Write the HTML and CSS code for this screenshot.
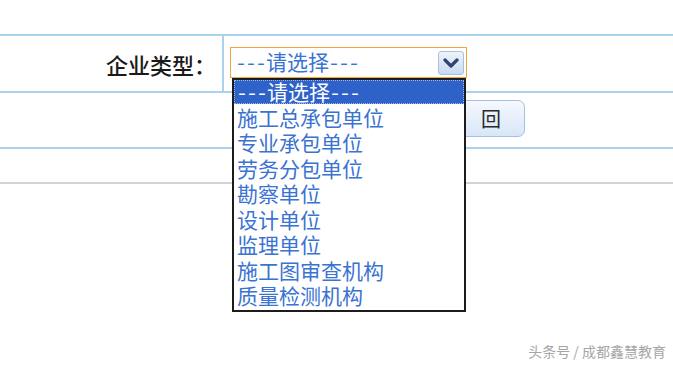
FILE: index.html
```html
<!DOCTYPE html>
<html>
  <head>
    <title>企业类型</title>
    <link rel="stylesheet" href="styles.css">
  </head>

  <body>
    <div class="form">
      <div class="row row-type">
        <div class="label-cell">企业类型：</div>
        <div class="field-cell">
          <div class="select-wrap">
            <div class="select">
              <span class="select-text"><span class="dash">---</span>请选择<span class="dash">---</span></span>
              <span class="select-arrow">
                <svg width="18" height="10" viewBox="0 0 18 10">
                  <path d="M3 2 L9 8 L15 2" fill="none" stroke="#2c4573" stroke-width="3.2" stroke-linecap="round" stroke-linejoin="round"/>
                </svg>
              </span>
            </div>

            <!-- open dropdown list -->
            <ul class="options">
              <li class="option selected"><span class="dash">---</span>请选择<span class="dash">---</span></li>
              <li class="option">施工总承包单位</li>
              <li class="option">专业承包单位</li>
              <li class="option">劳务分包单位</li>
              <li class="option">勘察单位</li>
              <li class="option">设计单位</li>
              <li class="option">监理单位</li>
              <li class="option">施工图审查机构</li>
              <li class="option">质量检测机构</li>
            </ul>
          </div>
        </div>
      </div>

      <div class="row row-actions">
        <button class="btn">返回</button>
      </div>

      <div class="row row-empty"></div>
    </div>

    <div class="watermark">头条号 / 成都鑫慧教育</div>
  </body>
</html>
```

FILE: styles.css
```css
* {
  box-sizing: border-box;
  margin: 0;
  padding: 0;
}

body {
  background: #fff;
  font-family: "Noto Sans CJK SC", sans-serif;
  padding-top: 34px;
}

.row {
  border-top: 2px solid #a9d2ee;
}

.row-type {
  display: flex;
  height: 57px;
}

.label-cell {
  width: 224px;
  border-right: 2px solid #a9d2ee;
  display: flex;
  align-items: center;
  justify-content: flex-end;
  padding-right: 6px;
  font-size: 22px;
  font-weight: 500;
  color: #1a1a1a;
}

.field-cell {
  padding-left: 6px;
  padding-top: 11px;
}

.select-wrap {
  position: relative;
}

.select {
  width: 237px;
  height: 31px;
  border: 1.5px solid #f3a53f;
  display: flex;
  align-items: center;
  justify-content: space-between;
  padding: 0 2px 0 5px;
  background: #fff;
}

.select-text,
.option {
  font-family: "Liberation Sans", "Noto Sans CJK SC", sans-serif;
  font-size: 21px;
  line-height: 25px;
  color: #3a73d2;
}

.select-text {
  margin-top: -2px;
}

/* half-width dashes, like the old bitmap font */
.dash {
  font-family: "Noto Sans CJK SC", sans-serif;
  font-feature-settings: "hwid" 1;
  font-size: 20px;
}

.select-arrow {
  width: 26px;
  height: 24px;
  border: 1px solid #a8c0e0;
  border-radius: 3px;
  background: linear-gradient(#eef4fc, #c9daf1);
  display: flex;
  align-items: center;
  justify-content: center;
}

.options {
  list-style: none;
  position: absolute;
  top: 31px;
  left: 2px;
  width: 234px;
  height: 234px;
  border: 2px solid #1c1c1c;
  background: #fff;
  z-index: 2;
}

.option {
  height: 25.5px;
  padding-left: 3px;
  white-space: nowrap;
}

.option.selected {
  background: #2f62c9;
  color: #fff;
  outline: 1px dotted #9fb6e6;
  outline-offset: -1px;
  height: 24px;
  line-height: 23px;
  margin-bottom: 1.5px;
}

.row-actions {
  height: 56px;
  padding-top: 7px;
  padding-left: 420px;
}

.btn {
  width: 105px;
  height: 37px;
  border: 1px solid #a3c0e2;
  border-radius: 7px;
  background: linear-gradient(#f6f9fe, #d7e6f7);
  font-family: "Noto Sans CJK SC", sans-serif;
  font-size: 20px;
  color: #2a2a2a;
  text-align: left;
  padding-left: 23px;
  letter-spacing: 17px;
}

.row-empty {
  height: 37px;
  border-bottom: 2px solid #d2d2d2;
}

.watermark {
  margin-top: 157px;
  padding-right: 7px;
  text-align: right;
  font-size: 14px;
  color: #a6a6a6;
}
```
